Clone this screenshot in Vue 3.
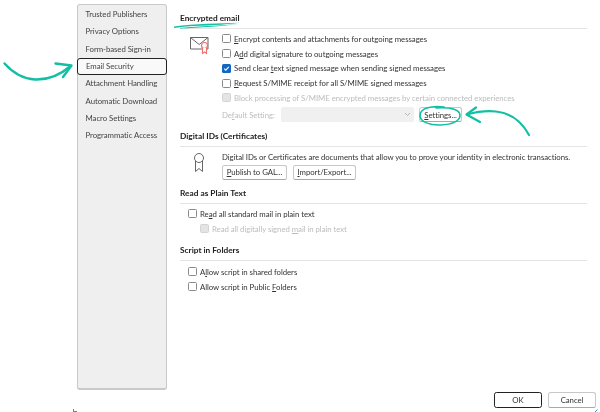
<script setup>
const navItems = ['Trusted Publishers', 'Privacy Options', 'Form-based Sign-in', 'Email Security', 'Attachment Handling', 'Automatic Download', 'Macro Settings', 'Programmatic Access']
</script>

<template>
  <div class="page">
    <nav class="side">
      <div v-for="n in navItems" :key="n" class="nav" :class="{ sel: n === 'Email Security' }">{{ n }}</div>
    </nav>

    <main class="main">
      <h2 class="head first">Encrypted email</h2>
      <section class="sec enc">
        <svg class="env" width="22" height="19" viewBox="0 0 22 19">
          <path d="M1.5 1.5H19V13H1.5Z M1.5 1.5L10.2 8.5L19 1.5" fill="none" stroke="#666" stroke-width="1" />
          <circle cx="15.5" cy="9.5" r="3" fill="#fff" stroke="#f2706e" stroke-width="1.2" />
          <path d="M13.5 12V17.5L15.5 16L17.5 17.5V12" fill="#fff" stroke="#f2706e" stroke-width="1.1" />
        </svg>
        <div class="list">
          <div class="row"><span class="cb"></span><span><u>E</u>ncrypt contents and attachments for outgoing messages</span></div>
          <div class="row"><span class="cb"></span><span>A<u>d</u>d digital signature to outgoing messages</span></div>
          <div class="row"><span class="cb on"><svg width="9" height="9" viewBox="0 0 9 9"><path d="M2.2 4.7L3.8 6.2L6.8 2.9" fill="none" stroke="#fff" stroke-width="1.1" /></svg></span><span>Send clear <u>t</u>ext signed message when sending signed messages</span></div>
          <div class="row"><span class="cb"></span><span><u>R</u>equest S/MIME receipt for all S/MIME signed messages</span></div>
          <div class="row dis"><span class="cb"></span><span>Block processing of S/MIME encrypted messages by certain connected experiences</span></div>
          <div class="defrow">
            <span class="deflabel">De<u>f</u>ault Setting:</span>
            <span class="combo"><svg width="7" height="5" viewBox="0 0 7 5"><path d="M1 1L3.5 3.5L6 1" fill="none" stroke="#b5b5b5" stroke-width="1" /></svg></span>
            <button class="btn set"><u>S</u>ettings...</button>
          </div>
        </div>
      </section>

      <h2 class="head">Digital IDs (Certificates)</h2>
      <section class="sec ids">
        <svg class="cert" width="12" height="21" viewBox="0 0 12 21">
          <circle cx="6" cy="6" r="4.5" fill="none" stroke="#666" stroke-width="1" />
          <path d="M2.5 9V19.5L6 16.5L9.5 19.5V9" fill="none" stroke="#666" stroke-width="1" />
        </svg>
        <div>
          <p class="desc">Digital IDs or Certificates are documents that allow you to prove your identity in electronic transactions.</p>
          <div class="btns">
            <button class="btn pub"><u>P</u>ublish to GAL...</button>
            <button class="btn imp"><u>I</u>mport/Export...</button>
          </div>
        </div>
      </section>

      <h2 class="head">Read as Plain Text</h2>
      <section class="sec plain read">
        <div class="row"><span class="cb"></span><span>Re<u>a</u>d all standard mail in plain text</span></div>
        <div class="row dis sub"><span class="cb"></span><span>Read all digitally signed <u>m</u>ail in plain text</span></div>
      </section>

      <h2 class="head">Script in Folders</h2>
      <section class="sec plain script">
        <div class="row"><span class="cb"></span><span>A<u>l</u>low script in shared folders</span></div>
        <div class="row"><span class="cb"></span><span>Allow script in Public <u>F</u>olders</span></div>
      </section>
    </main>

    <footer class="foot">
      <button class="btn ok">OK</button>
      <button class="btn cancel">Cancel</button>
    </footer>

    <svg class="marks" width="600" height="412" viewBox="0 0 600 412">
      <g fill="none" stroke="#12bfa4" stroke-linecap="round" stroke-linejoin="round">
        <path d="M4.5 63.5C14 74 24 79 35 79.5C47 80 60 75 70 66.5" stroke-width="2.4" />
        <path d="M55.5 63.5L71.5 65.5L63 77" stroke-width="2.4" />
        <path d="M529 135C522 122 511 113 496 111.5C486 110.5 476 112 467 114.5" stroke-width="2.2" />
        <path d="M476 107.5L466.5 114.5L480 122" stroke-width="2.2" />
        <path d="M444 107C430 105 420 109 420 115.5C420 122 430 125.5 441 125C452 124.5 460 121 460 115.5C460 110 452 107 436 108" stroke-width="1.6" />
      </g>
      <path d="M174 26.5C195 23.5 220 23.5 240 22.8C225 25 205 25.5 186 26.5C182 27 178 27.5 174 28Z" fill="#12bfa4" />
      <path d="M180 28C200 26 222 25.5 239 24C222 26.5 200 27.5 180 28.6Z" fill="#12bfa4" />
      <path d="M73.5 409V412M73.5 411.5H77" stroke="#3f8fc4" fill="none" />
      <path d="M597.5 409.5L595 412" stroke="#3f8fc4" fill="none" />
    </svg>
  </div>
</template>

<style>
html, body { margin: 0; background: #fff; }
</style>

<style scoped>
.page {
  position: relative;
  display: flex;
  width: 600px;
  height: 412px;
  overflow: hidden;
  background: #fff;
  font-family: "Lato", "Open Sans", sans-serif;
  font-size: 7.8px;
  letter-spacing: -0.05px;
  line-height: 12px;
  color: #333;
  filter: blur(0.3px);
}
.side {
  box-sizing: border-box;
  width: 90px;
  height: 386px;
  margin: 4px 0 0 77px;
  padding-top: 0.5px;
  background: #efefef;
  border: 1px solid #c9c9c9;
  border-bottom-width: 2px;
  border-radius: 3px;
}
.nav {
  box-sizing: border-box;
  height: 17.35px;
  padding: 2.5px 7.5px 0;
  white-space: nowrap;
  color: #444;
}
.sel {
  margin: 0 -1px;
  padding: 1.5px 8px 0;
  background: #f9f9f9;
  border: 1.3px solid #222;
  border-radius: 3px;
}
.main {
  width: 407px;
  margin-left: 13px;
  padding-top: 12px;
}
.head {
  margin: 0;
  height: 12px;
  padding-bottom: 3.5px;
  border-bottom: 1px solid #e4e4e4;
  font-size: 8.3px;
  letter-spacing: 0;
  line-height: 12px;
  font-weight: 700;
  color: #222;
}
.sec { display: flex; box-sizing: border-box; }
.enc { height: 101.5px; padding-top: 3px; }
.env { margin: 4.5px 0 0 9px; flex: none; }
.list { margin-left: 11px; }
.row {
  display: flex;
  align-items: center;
  height: 14.75px;
  white-space: nowrap;
}
.cb {
  box-sizing: border-box;
  flex: none;
  width: 9px;
  height: 9px;
  margin-right: 3px;
  background: #fff;
  border: 1px solid #8a8a8a;
  border-radius: 1.5px;
}
.cb.on {
  display: flex;
  background: #1467c0;
  border: 0;
}
.dis { color: #bcbcbc; }
.dis .cb { background: #e4e4e4; border-color: #d4d4d4; }
.defrow {
  display: flex;
  align-items: center;
  height: 16px;
  margin-top: 1.5px;
}
.deflabel { width: 59px; color: #bcbcbc; white-space: nowrap; }
.combo {
  box-sizing: border-box;
  display: flex;
  align-items: center;
  justify-content: flex-end;
  width: 133px;
  height: 15px;
  padding-right: 3px;
  background: #f0f0f0;
  border-radius: 2px;
}
.btn {
  box-sizing: border-box;
  padding: 0;
  height: 15px;
  background: #fff;
  border: 1px solid #c8c8c8;
  border-bottom-color: #a8a8a8;
  border-radius: 2.5px;
  font: inherit;
  letter-spacing: inherit;
  color: #333;
  white-space: nowrap;
}
.set { width: 43px; margin-left: 5px; }
.ids { height: 40.8px; padding-top: 4.5px; }
.cert { margin: 1px 0 0 13px; flex: none; }
.ids > div { margin-left: 17px; }
.desc { margin: 0; white-space: nowrap; height: 12px; }
.btns { display: flex; gap: 6px; margin-top: 1.5px; }
.pub { width: 65px; }
.imp { width: 63px; }
.plain {
  display: block;
  height: 40.5px;
  padding-left: 8px;
}
.read { padding-top: 2.8px; }
.script { padding-top: 3.8px; }
.sub { margin-left: 12px; }
.foot {
  position: absolute;
  right: 4px;
  top: 392px;
  display: flex;
  gap: 6px;
}
.ok, .cancel { width: 48px; height: 15.5px; }
.ok { border: 1.3px solid #222; }
.marks {
  position: absolute;
  left: 0;
  top: 0;
  pointer-events: none;
}
</style>
